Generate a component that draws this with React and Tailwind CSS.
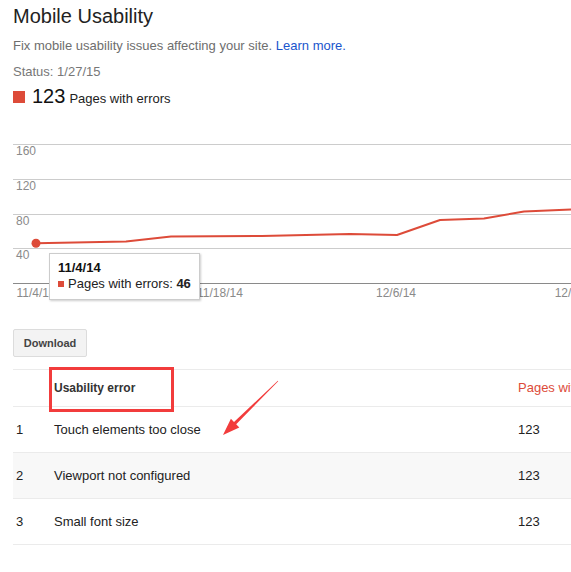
import React from "react";

const LINE = [
  [36, 243.3], [126, 241.5], [171, 236.5], [262, 236], [350, 234],
  [397, 235], [440, 220], [484, 218.5], [524, 211.5], [571, 209.5],
];

const ROWS = [
  { n: 1, name: "Touch elements too close", pages: 123 },
  { n: 2, name: "Viewport not configured", pages: 123 },
  { n: 3, name: "Small font size", pages: 123 },
];

function Chart() {
  const grid = [144, 179, 214, 248];
  const labels = ["160", "120", "80", "40"];
  return (
    <div className="relative mt-[22px] h-[175px]">
      <svg width="558" height="175" viewBox="13 130 558 175" className="block">
        {grid.map((y, i) => (
          <g key={y}>
            <line x1="13" x2="571" y1={y + 0.5} y2={y + 0.5} stroke="#cccccc" strokeWidth="1" />
            <text x="16" y={y + 10.5} fontSize="12" fill="#8a8a8a" fontFamily="Liberation Sans, Arial, sans-serif">
              {labels[i]}
            </text>
          </g>
        ))}
        <line x1="13" x2="571" y1="283.5" y2="283.5" stroke="#8a8a8a" strokeWidth="1" />
        {[["11/4/14", 36], ["11/18/14", 220], ["12/6/14", 396], ["12/24/14", 578]].map(([t, x]) => (
          <text key={t} x={x} y="297" fontSize="12" fill="#8a8a8a" textAnchor="middle" fontFamily="Liberation Sans, Arial, sans-serif">
            {t}
          </text>
        ))}
        <polyline
          points={LINE.map((p) => p.join(",")).join(" ")}
          fill="none"
          stroke="#dd4b39"
          strokeWidth="2"
          strokeLinejoin="round"
        />
        <circle cx="36" cy="243.3" r="4.5" fill="#dd4b39" />
      </svg>

      {/* tooltip */}
      <div className="absolute left-[36px] top-[123px] w-[151px] h-[47px] bg-white border border-[#cccccc] shadow-[1px_1px_2px_rgba(0,0,0,0.2)] pl-[8px] pt-[6px]">
        <div className="text-[13px] leading-[16px] font-bold text-[#111]">11/4/14</div>
        <div className="flex items-center text-[13px] leading-[16px] text-[#222]">
          <span className="w-[6px] h-[6px] bg-[#dd4b39] mr-[4px]"></span>
          Pages with errors:&nbsp;<b>46</b>
        </div>
      </div>
    </div>
  );
}

export default function App() {
  return (
    <div
      className="w-[571px] h-[572px] overflow-hidden bg-white pl-[13px] pt-[4px]"
      style={{ fontFamily: '"Liberation Sans", Arial, sans-serif' }}
    >
      <h1 className="text-[20px] leading-[24px] text-[#222]">Mobile Usability</h1>
      <p className="mt-[9.5px] text-[13px] leading-[16px] text-[#6e6e6e]">
        Fix mobile usability issues affecting your site.{" "}
        <span className="text-[#1a55cc]">Learn more.</span>
      </p>
      <p className="mt-[10px] text-[13px] leading-[16px] text-[#777]">Status: 1/27/15</p>
      <div className="mt-[4.5px] flex items-baseline h-[24px]">
        <span className="w-[12px] h-[12px] bg-[#dd4b39] mr-[7px]"></span>
        <span className="text-[20px] leading-[24px] text-[#111]">123</span>
        <span className="ml-[4px] text-[13px] text-[#222]">Pages with errors</span>
      </div>

      <Chart />

      <button className="mt-[24px] w-[74px] h-[28px] rounded-[2px] border border-[#dcdcdc] bg-[#f3f3f3] text-[11px] font-bold text-[#444] flex items-center justify-center">
        Download
      </button>

      {/* table */}
      <div className="relative mt-[12px] w-[640px]">
        <div className="flex items-center h-[38px] border-y border-[#ebebeb]">
          <div className="w-[41px]"></div>
          <div className="relative w-[464px] text-[12px] leading-[18px] font-bold text-[#333]">
            Usability error
            <div className="absolute -left-[5px] -top-[12px] w-[125px] h-[45px] border-[3px] border-[#f23c3c]"></div>
          </div>
          <div className="text-[13px] text-[#dd4b39]">Pages with errors</div>
        </div>
        {ROWS.map((r, i) => (
          <div
            key={r.n}
            className={`flex items-center h-[46px] border-b border-[#ebebeb] text-[13px] text-[#222] ${i === 1 ? "bg-[#f8f8f8]" : ""}`}
          >
            <div className="w-[41px] pl-[3px]">{r.n}</div>
            <div className="w-[464px]">{r.name}</div>
            <div>{r.pages}</div>
          </div>
        ))}

        {/* annotation arrow */}
        <svg
          className="absolute left-0 top-0 pointer-events-none"
          width="300"
          height="100"
          viewBox="13 369 300 100"
        >
          <polygon
            points="278.2,381.2 236.2,424.2 239.3,427.4 223,435 230.9,418.8 234,422 277.8,380.8"
            fill="#f23c3c"
          />
        </svg>
      </div>
    </div>
  );
}
